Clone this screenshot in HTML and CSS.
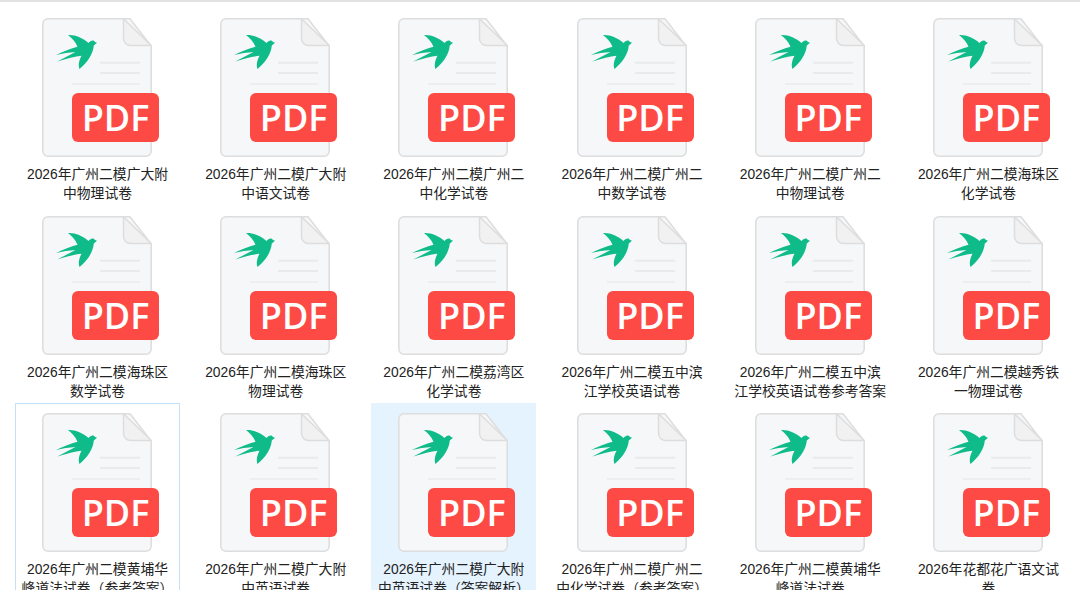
FILE: index.html
```html
<!DOCTYPE html>
<html lang="zh-CN">
<head>
    <meta charset="UTF-8">
    <title>2026年广州二模</title>
    <link rel="stylesheet" href="styles.css">
</head>
<body>
    <svg class="defs" width="0" height="0">
        <symbol id="pdf-file" viewBox="0 0 110 139">
            <path d="M88 .8H6A5.200 5.200 0 0 0 .8 6v127a5.200 5.200 0 0 0 5.200 5.200h98a5.200 5.200 0 0 0 5.200-5.200V28z" fill="#f5f7f9" stroke="#dddddd" stroke-width="1.500"/>
            <path d="M81.500 .8V20.500a7 7 0 0 0 7 7h20.700z" fill="#f1f1f1" stroke="#dddddd" stroke-width="1.500"/>
            <path d="M58 44.700h40M58 55h40" stroke="#e8eaeb" stroke-width="2"/>
            <path d="M30 66h68" stroke="#eceeef" stroke-width="2"/>
            <path class="bird" d="M26 17C33 16.500 41 20 46.500 25C48.500 22 52 21.500 53 24L55 24.800L51.800 27.500C51 36 46 44 37.500 51C36 47.500 37 42.500 39.500 37.800C33 38.500 25 40.500 15.300 43.500L33.500 34C27 34.300 20.500 35.500 14 37C21 33.500 29 30.500 35.500 28.800C33.500 24 30 20 26 17z"/>
        </symbol>
    </svg>

    <main class="file-grid">
        <div class="file-item"><div class="file-icon"><svg class="file-sheet"><use href="#pdf-file"/></svg><span class="pdf-badge">PDF</span></div><p class="file-name">2026年广州二模广大附<br>中物理试卷</p></div>
        <div class="file-item"><div class="file-icon"><svg class="file-sheet"><use href="#pdf-file"/></svg><span class="pdf-badge">PDF</span></div><p class="file-name">2026年广州二模广大附<br>中语文试卷</p></div>
        <div class="file-item"><div class="file-icon"><svg class="file-sheet"><use href="#pdf-file"/></svg><span class="pdf-badge">PDF</span></div><p class="file-name">2026年广州二模广州二<br>中化学试卷</p></div>
        <div class="file-item"><div class="file-icon"><svg class="file-sheet"><use href="#pdf-file"/></svg><span class="pdf-badge">PDF</span></div><p class="file-name">2026年广州二模广州二<br>中数学试卷</p></div>
        <div class="file-item"><div class="file-icon"><svg class="file-sheet"><use href="#pdf-file"/></svg><span class="pdf-badge">PDF</span></div><p class="file-name">2026年广州二模广州二<br>中物理试卷</p></div>
        <div class="file-item"><div class="file-icon"><svg class="file-sheet"><use href="#pdf-file"/></svg><span class="pdf-badge">PDF</span></div><p class="file-name">2026年广州二模海珠区<br>化学试卷</p></div>

        <div class="file-item"><div class="file-icon"><svg class="file-sheet"><use href="#pdf-file"/></svg><span class="pdf-badge">PDF</span></div><p class="file-name">2026年广州二模海珠区<br>数学试卷</p></div>
        <div class="file-item"><div class="file-icon"><svg class="file-sheet"><use href="#pdf-file"/></svg><span class="pdf-badge">PDF</span></div><p class="file-name">2026年广州二模海珠区<br>物理试卷</p></div>
        <div class="file-item"><div class="file-icon"><svg class="file-sheet"><use href="#pdf-file"/></svg><span class="pdf-badge">PDF</span></div><p class="file-name">2026年广州二模荔湾区<br>化学试卷</p></div>
        <div class="file-item"><div class="file-icon"><svg class="file-sheet"><use href="#pdf-file"/></svg><span class="pdf-badge">PDF</span></div><p class="file-name">2026年广州二模五中滨<br>江学校英语试卷</p></div>
        <div class="file-item"><div class="file-icon"><svg class="file-sheet"><use href="#pdf-file"/></svg><span class="pdf-badge">PDF</span></div><p class="file-name">2026年广州二模五中滨<br>江学校英语试卷参考答案</p></div>
        <div class="file-item"><div class="file-icon"><svg class="file-sheet"><use href="#pdf-file"/></svg><span class="pdf-badge">PDF</span></div><p class="file-name">2026年广州二模越秀铁<br>一物理试卷</p></div>

        <div class="file-item outlined"><div class="file-icon"><svg class="file-sheet"><use href="#pdf-file"/></svg><span class="pdf-badge">PDF</span></div><p class="file-name">2026年广州二模黄埔华<br>峰道法试卷（参考答案）</p></div>
        <div class="file-item"><div class="file-icon"><svg class="file-sheet"><use href="#pdf-file"/></svg><span class="pdf-badge">PDF</span></div><p class="file-name">2026年广州二模广大附<br>中英语试卷</p></div>
        <div class="file-item selected"><div class="file-icon"><svg class="file-sheet"><use href="#pdf-file"/></svg><span class="pdf-badge">PDF</span></div><p class="file-name">2026年广州二模广大附<br>中英语试卷（答案解析）</p></div>
        <div class="file-item"><div class="file-icon"><svg class="file-sheet"><use href="#pdf-file"/></svg><span class="pdf-badge">PDF</span></div><p class="file-name">2026年广州二模广州二<br>中化学试卷（参考答案）</p></div>
        <div class="file-item"><div class="file-icon"><svg class="file-sheet"><use href="#pdf-file"/></svg><span class="pdf-badge">PDF</span></div><p class="file-name">2026年广州二模黄埔华<br>峰道法试卷</p></div>
        <div class="file-item"><div class="file-icon"><svg class="file-sheet"><use href="#pdf-file"/></svg><span class="pdf-badge">PDF</span></div><p class="file-name">2026年花都花广语文试<br>卷</p></div>
    </main>
</body>
</html>
```
FILE: styles.css
```css
body {
    margin: 0;
    background-color: #fff;
    overflow: hidden;
}

.defs {
    display: block;
}

/* Grid of files */
.file-grid {
    display: grid;
    grid-template-columns: repeat(6, 165px);
    grid-auto-rows: 197.6px;
    column-gap: 13.2px;
    height: 582px;
    padding: 6px 0 0 15px;
    border-top: 2px solid #e2e2e2;
    overflow: hidden;
    font-family: "Liberation Sans", "Noto Sans CJK SC", sans-serif;
    color: #222;
}

.file-item {
    border: 1px solid transparent;
    box-sizing: border-box;
}

.file-item.outlined {
    border-color: #c4e0f7;
}

.file-item.selected {
    background-color: #e5f3ff;
}

/* Icon */
.file-icon {
    position: relative;
    width: 116px;
    height: 139px;
    margin: 9px 0 0 26px;
}

.file-sheet {
    display: block;
    width: 110px;
    height: 139px;
}

.pdf-badge {
    position: absolute;
    left: 30px;
    top: 75px;
    display: flex;
    align-items: center;
    justify-content: center;
    width: 87px;
    height: 49px;
    border-radius: 6px;
    background-color: #fd4a45;
    color: #fff;
    font-family: "Open Sans", sans-serif;
    font-size: 36px;
    font-weight: 600;
    line-height: 49px;
}

.bird {
    fill: #10bb8a;
}

.file-name {
    margin: 8px 0 0;
    font-size: 13.8px;
    line-height: 19px;
    text-align: center;
    white-space: nowrap;
}
```
